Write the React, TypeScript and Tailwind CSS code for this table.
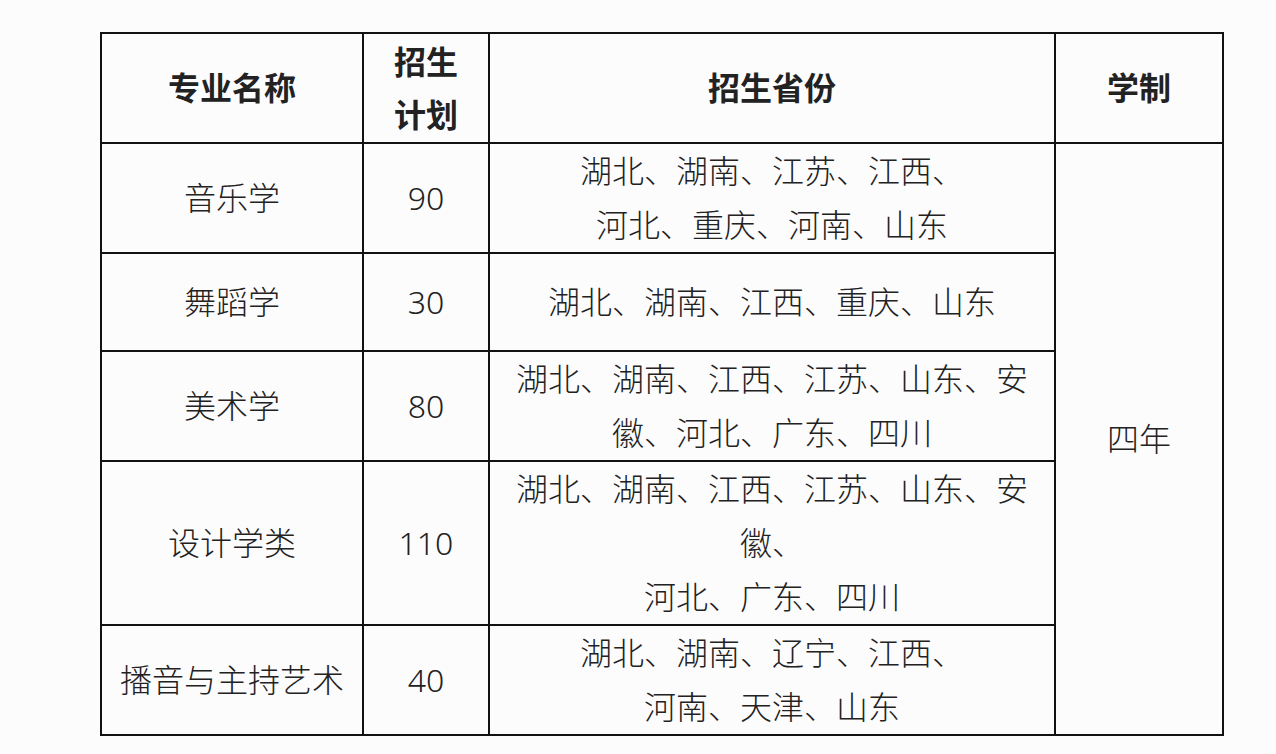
const rows = [
  { name: '音乐学', plan: '90', lines: ['湖北、湖南、江苏、江西、', '河北、重庆、河南、山东'], h: 'h-[110px]' },
  { name: '舞蹈学', plan: '30', lines: ['湖北、湖南、江西、重庆、山东'], h: 'h-[98px]' },
  { name: '美术学', plan: '80', lines: ['湖北、湖南、江西、江苏、山东、安', '徽、河北、广东、四川'], h: 'h-[110px]' },
  { name: '设计学类', plan: '110', lines: ['湖北、湖南、江西、江苏、山东、安', '徽、', '河北、广东、四川'], h: 'h-[164px]' },
  { name: '播音与主持艺术', plan: '40', lines: ['湖北、湖南、辽宁、江西、', '河南、天津、山东'], h: 'h-[110px]' },
];

export default function App() {
  const cell = 'border-2 border-[#111] text-center align-middle p-0';
  return (
    <div
      className="w-[1276px] h-[754px] bg-[#fdfcfd] pt-[32px] pl-[100px] text-[#222]"
      style={{ fontFamily: '"Noto Sans", "Noto Sans CJK SC", sans-serif' }}
    >
      <table className="border-collapse table-fixed w-[1124px] text-[32px] leading-[54px] font-light">
        <colgroup>
          <col className="w-[262px]" />
          <col className="w-[126px]" />
          <col className="w-[566px]" />
          <col className="w-[168px]" />
        </colgroup>
        <thead>
          <tr className="h-[110px] font-bold">
            <th className={cell}>专业名称</th>
            <th className={cell}>
              <div className="leading-[53px]">招生<br />计划</div>
            </th>
            <th className={cell}>招生省份</th>
            <th className={cell}>学制</th>
          </tr>
        </thead>
        <tbody>
          {rows.map((r, i) => (
            <tr key={r.name} className={r.h}>
              <td className={cell}>{r.name}</td>
              <td className={cell}>{r.plan}</td>
              <td className={cell}>
                {r.lines.map((l) => (
                  <div key={l}>{l}</div>
                ))}
              </td>
              {i === 0 && (
                <td className={cell} rowSpan={rows.length}>四年</td>
              )}
            </tr>
          ))}
        </tbody>
      </table>
    </div>
  );
}
